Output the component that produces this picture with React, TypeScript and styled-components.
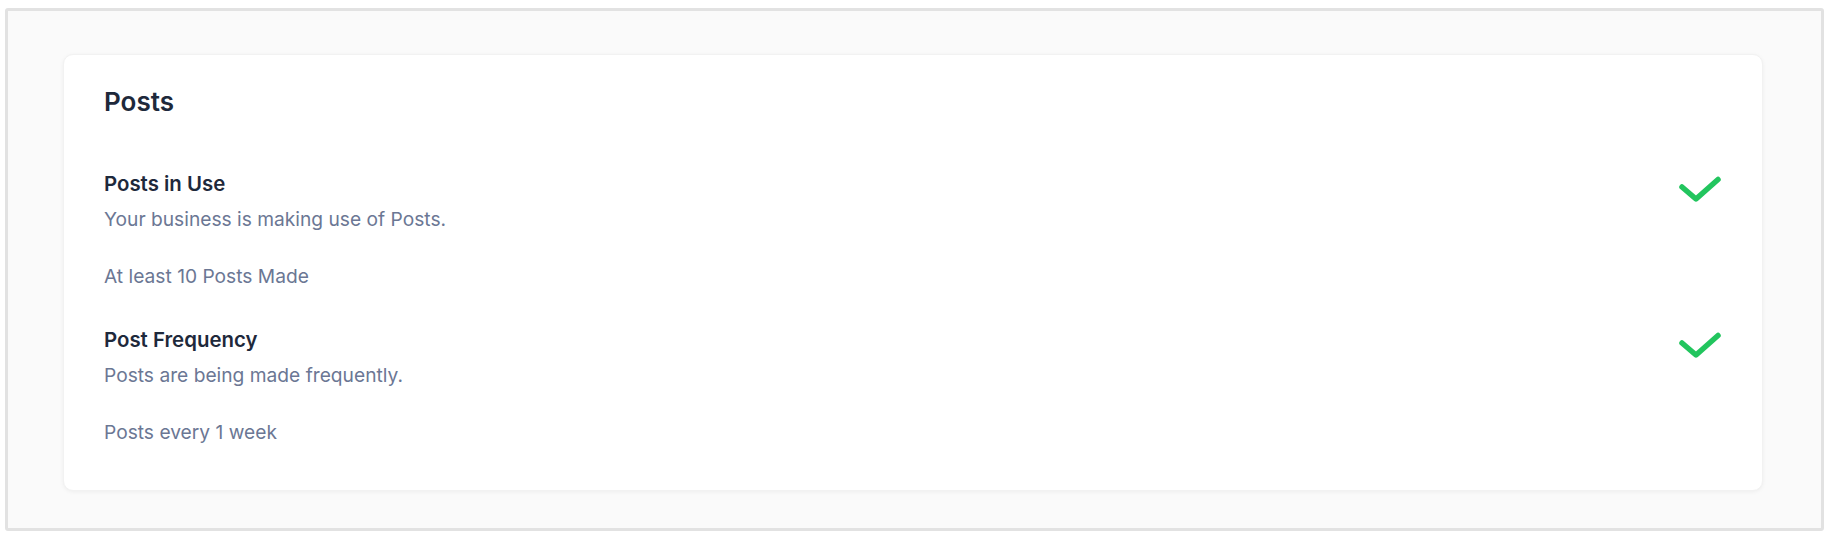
import styled, { createGlobalStyle } from 'styled-components';

const GlobalStyle = createGlobalStyle`
  * {
    box-sizing: border-box;
  }

  body {
    margin: 0;
    background: #ffffff;
    font-family: Inter, 'Noto Sans', sans-serif;
  }
`;

const checks = [
  {
    title: 'Posts in Use',
    description: 'Your business is making use of Posts.',
    metric: 'At least 10 Posts Made',
    passed: true,
  },
  {
    title: 'Post Frequency',
    description: 'Posts are being made frequently.',
    metric: 'Posts every 1 week',
    passed: true,
  },
];

const CheckMark = () => (
  <svg width="46" height="34" viewBox="0 0 46 34" fill="none">
    <polyline
      points="5,14 19,26 41,6.5"
      stroke="#22c55e"
      strokeWidth="5.5"
      strokeLinecap="round"
      strokeLinejoin="round"
    />
  </svg>
);

const App = () => {
  return (
    <>
      <GlobalStyle />
      <Frame>
        <Card>
          <CardTitle>Posts</CardTitle>
          <CheckList>
            {checks.map((item) => (
              <CheckRow key={item.title}>
                <CheckText>
                  <CheckTitle>{item.title}</CheckTitle>
                  <CheckDescription>{item.description}</CheckDescription>
                  <CheckMetric>{item.metric}</CheckMetric>
                </CheckText>
                <CheckIcon>{item.passed && <CheckMark />}</CheckIcon>
              </CheckRow>
            ))}
          </CheckList>
        </Card>
      </Frame>
    </>
  );
};

const Frame = styled.div`
  margin: 8px 6px 9px 5px;
  border: 3px solid #e2e2e2;
  border-radius: 3px;
  background: #fafafa;
  padding: 43px 58px 37px 55px;
`;

const Card = styled.section`
  background: #ffffff;
  border: 1px solid #f2f2f2;
  border-radius: 10px;
  box-shadow: 0 1px 4px rgba(0, 0, 0, 0.05);
  padding: 31px 39px 45px 40px;
`;

const CardTitle = styled.h2`
  margin: 0 0 52px;
  font-size: 26px;
  line-height: 32px;
  font-weight: 600;
  color: #1e293b;
`;

const CheckList = styled.div`
  display: flex;
  flex-direction: column;
  gap: 37px;
`;

const CheckRow = styled.div`
  display: flex;
  justify-content: space-between;
  align-items: flex-start;
`;

const CheckText = styled.div`
  display: flex;
  flex-direction: column;
`;

const CheckTitle = styled.h3`
  margin: 0 0 8px;
  font-size: 20.4px;
  line-height: 28px;
  font-weight: 600;
  color: #1e293b;
`;

const CheckDescription = styled.p`
  margin: 0 0 31px;
  font-size: 19.2px;
  line-height: 26px;
  color: #6b7794;
`;

const CheckMetric = styled(CheckDescription)`
  margin: 0;
`;

const CheckIcon = styled.div`
  width: 46px;
  height: 34px;
  margin-top: 3px;
`;

export default App;
